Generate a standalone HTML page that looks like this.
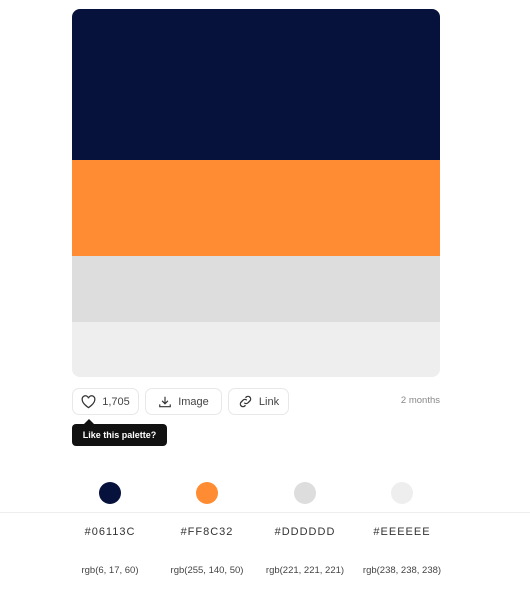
<!DOCTYPE html><html><head><style>
body{margin:0;width:530px;height:591px;background:#fff;font-family:"Liberation Sans",sans-serif;position:relative;overflow:hidden}
.pal{position:absolute;left:72px;top:9px;width:368px;height:368px;border-radius:8px;overflow:hidden}
.pal div{width:100%}
.btn{position:absolute;top:388px;height:27px;border:1px solid #e8e8e8;border-radius:7px;box-sizing:border-box;font-size:11px;color:#444;display:flex;align-items:center;justify-content:center;gap:6px}
.tip{position:absolute;left:72px;top:424px;width:95px;height:22px;background:#111;color:#fff;border-radius:4px;font-size:9px;font-weight:bold;display:flex;align-items:center;justify-content:center}
.tip:before{content:"";position:absolute;left:12px;top:-5px;border:5px solid transparent;border-top:0;border-bottom-color:#111}
.c{position:absolute;top:482px;width:22px;height:22px;border-radius:50%}
.hex,.rgb{position:absolute;width:110px;text-align:center;color:#333}
.hex{top:526px;font-size:11px;letter-spacing:1px}
.rgb{top:565px;font-size:9.5px;color:#444}
</style></head><body>
<div class="pal"><div style="height:151px;background:#06113C"></div><div style="height:96px;background:#FF8C32"></div><div style="height:66px;background:#DDDDDD"></div><div style="height:55px;background:#EEEEEE"></div></div>
<div class="btn" style="left:72px;width:67px"><svg width="15" height="14" viewBox="0 0 24 22"><path d="M12 20S2 13.5 2 7.5A5 5 0 0 1 12 5a5 5 0 0 1 10 2.5C22 13.5 12 20 12 20z" fill="none" stroke="#333" stroke-width="2"/></svg>1,705</div>
<div class="btn" style="left:145px;width:77px"><svg width="14" height="14" viewBox="0 0 24 24" fill="none" stroke="#333" stroke-width="2"><path d="M12 3v12M7 10l5 5 5-5M3 16v4h18v-4"/></svg>Image</div>
<div class="btn" style="left:228px;width:61px"><svg width="15" height="15" viewBox="0 0 24 24" fill="none" stroke="#333" stroke-width="2"><path d="M10 14a4 4 0 0 0 6 0l3-3a4 4 0 0 0-6-6l-1 1M14 10a4 4 0 0 0-6 0l-3 3a4 4 0 0 0 6 6l1-1"/></svg>Link</div>
<div style="position:absolute;right:90px;top:395px;font-size:9.5px;color:#888">2 months</div>
<div class="tip">Like this palette?</div>
<div class="c" style="left:99px;background:#06113C"></div>
<div class="c" style="left:196px;background:#FF8C32"></div>
<div class="c" style="left:294px;background:#DDDDDD"></div>
<div class="c" style="left:391px;background:#EEEEEE"></div>
<div style="position:absolute;left:0;top:512px;width:530px;height:1px;background:#eee"></div>
<div class="hex" style="left:55px">#06113C</div><div class="hex" style="left:152px">#FF8C32</div><div class="hex" style="left:250px">#DDDDDD</div><div class="hex" style="left:347px">#EEEEEE</div>
<div class="rgb" style="left:55px">rgb(6, 17, 60)</div><div class="rgb" style="left:152px">rgb(255, 140, 50)</div><div class="rgb" style="left:250px">rgb(221, 221, 221)</div><div class="rgb" style="left:347px">rgb(238, 238, 238)</div>
</body></html>
